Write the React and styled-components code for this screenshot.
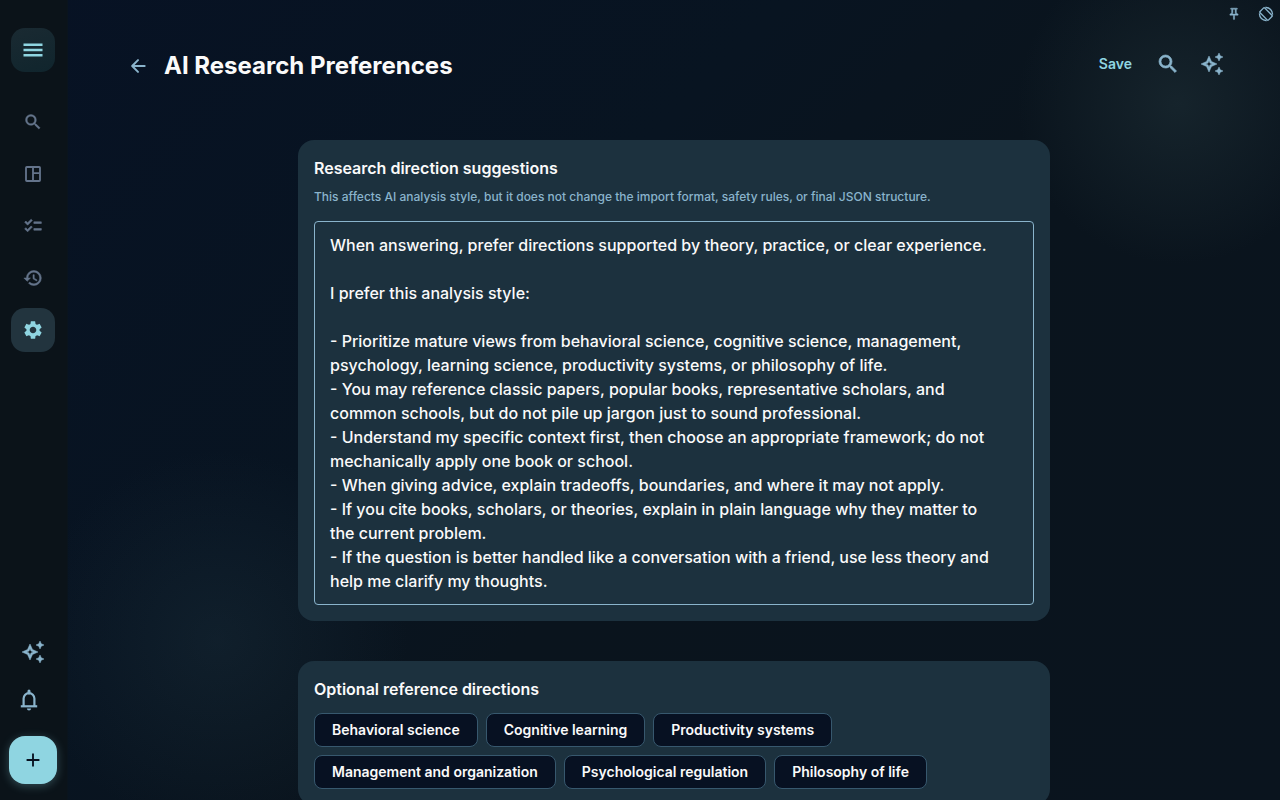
import React, { useState } from "react";
import styled, { createGlobalStyle } from "styled-components";
import {
  MdAdd,
  MdChecklist,
  MdHistory,
  MdOutlineAutoAwesome,
  MdOutlinePushPin,
  MdSearch,
  MdSettings,
} from "react-icons/md";

const GlobalStyle = createGlobalStyle`
  * {
    box-sizing: border-box;
  }
  body {
    margin: 0;
    background-color: #09121d;
    color: #fafafa;
    font-family: Inter, "Liberation Sans", sans-serif;
  }
  button,
  textarea {
    font-family: inherit;
  }
`;

const Page = styled.div`
  display: flex;
  height: 100vh;
  background:
    radial-gradient(circle at 92% 13%, rgba(44, 66, 72, 0.34) 0, rgba(14, 32, 48, 0) 160px),
    radial-gradient(circle at 17% 80%, rgba(36, 60, 72, 0.28) 0, rgba(14, 32, 48, 0) 190px),
    linear-gradient(135deg, #071224 0%, #081421 38%, #0a141d 56%, #0a141e 100%);
`;
const Sidebar = styled.nav`
  display: flex;
  flex-direction: column;
  align-items: center;
  flex-shrink: 0;
  width: 68px;
  padding: 28px 1px 16px 0;
  border-right: 1px solid #0a141d;
  background-color: #0b1319;
`;
const IconButton = styled.button`
  display: flex;
  align-items: center;
  justify-content: center;
  width: ${(props) => props.$size || 44}px;
  height: ${(props) => props.$size || 44}px;
  padding: 0;
  border: none;
  border-radius: 14px;
  background: ${(props) => props.$fill || "transparent"};
  color: ${(props) => props.$color || "#8ab4cc"};
  cursor: pointer;

  path[fill="none"] {
    stroke: none;
  }
`;
const NavList = styled.div`
  display: flex;
  flex-direction: column;
  gap: 8px;
  margin-top: 28px;
`;
const SidebarFooter = styled.div`
  display: flex;
  flex-direction: column;
  align-items: flex-start;
  gap: 4px;
  margin-top: auto;
`;
const AddButton = styled.button`
  display: flex;
  align-items: center;
  justify-content: center;
  width: 48px;
  height: 48px;
  margin-top: 12px;
  padding: 0;
  border: none;
  border-radius: 16px;
  background-color: #8fd5e1;
  color: #07111f;
  box-shadow: 0 2px 10px rgba(143, 213, 225, 0.3);
  cursor: pointer;
`;
const Content = styled.div`
  display: flex;
  flex-direction: column;
  flex: 1;
  min-width: 0;
`;
const WindowBar = styled.div`
  display: flex;
  justify-content: flex-end;
  gap: 16px;
  padding: 6px 6px 0;
`;
const Header = styled.header`
  display: flex;
  align-items: center;
  justify-content: space-between;
  padding: 20px 46px 0 60px;
`;
const Heading = styled.div`
  display: flex;
  align-items: center;
  gap: 16px;
  padding-top: 4px;
`;
const Title = styled.h1`
  margin: 0;
  font-size: 24px;
  font-weight: 700;
  line-height: 32px;
`;
const Actions = styled.div`
  display: flex;
  align-items: center;
`;
const SaveButton = styled.button`
  padding: 8px 14px;
  border: none;
  background: none;
  color: #8fd5e1;
  font-size: 14px;
  font-weight: 600;
  line-height: 20px;
  cursor: pointer;
`;
const Scroller = styled.main`
  display: flex;
  flex-direction: column;
  align-items: center;
  gap: 40px;
  flex: 1;
  margin-top: 54px;
  padding: 0 24px 40px;
  overflow-y: auto;
  scrollbar-width: none;
`;
const Card = styled.section`
  flex-shrink: 0;
  width: 100%;
  max-width: 752px;
  padding: 16px;
  border-radius: 16px;
  background-color: #1c313e;
`;
const CardTitle = styled.h2`
  margin: 0;
  font-size: 16px;
  font-weight: 600;
  line-height: 24px;
`;
const Hint = styled.p`
  margin: 8px 0 16px;
  color: #8ab4cc;
  font-size: 12px;
  font-weight: 500;
  line-height: 17px;
`;
const PromptInput = styled.textarea`
  display: block;
  width: 100%;
  padding: 11px 32px 11px 15px;
  border: 1px solid #8ab4cc;
  border-radius: 4px;
  outline: none;
  background: transparent;
  color: #fafafa;
  font-size: 16px;
  font-weight: 500;
  line-height: 24px;
  resize: none;
  field-sizing: content;
`;
const ChipList = styled.div`
  display: flex;
  flex-wrap: wrap;
  gap: 8px;
  margin-top: 12px;
`;
const Chip = styled.button`
  padding: 6px 17px;
  border: 1px solid #37586e;
  border-radius: 8px;
  background-color: #071122;
  color: #fafafa;
  font-size: 14px;
  font-weight: 600;
  line-height: 20px;
  cursor: pointer;
`;

const DEFAULT_PROMPT = `When answering, prefer directions supported by theory, practice, or clear experience.

I prefer this analysis style:

- Prioritize mature views from behavioral science, cognitive science, management, psychology, learning science, productivity systems, or philosophy of life.
- You may reference classic papers, popular books, representative scholars, and common schools, but do not pile up jargon just to sound professional.
- Understand my specific context first, then choose an appropriate framework; do not mechanically apply one book or school.
- When giving advice, explain tradeoffs, boundaries, and where it may not apply.
- If you cite books, scholars, or theories, explain in plain language why they matter to the current problem.
- If the question is better handled like a conversation with a friend, use less theory and help me clarify my thoughts.`;

const DIRECTIONS = [
  "Behavioral science",
  "Cognitive learning",
  "Productivity systems",
  "Management and organization",
  "Psychological regulation",
  "Philosophy of life",
];

const MenuIcon = () => (
  <svg width="20" height="14" viewBox="0 0 20 14" fill="currentColor">
    <path d="M0.5 0.5h19v2.6h-19zM0.5 5.7h19v2.6h-19zM0.5 10.9h19v2.6h-19z" />
  </svg>
);

const BoardIcon = () => (
  <svg width="20" height="20" viewBox="0 0 24 24" fill="none" stroke="currentColor" strokeWidth="2.2">
    <rect x="3.6" y="3.6" width="16.8" height="16.8" rx="1" />
    <path d="M12 4v16M12 11h8" />
  </svg>
);

const BackIcon = () => (
  <svg width="20" height="20" viewBox="0 0 24 24" fill="none" stroke="currentColor" strokeWidth="2.4" strokeLinecap="round" strokeLinejoin="round">
    <path d="M20 12H6M12 19l-7-7 7-7" />
  </svg>
);

const BellIcon = () => (
  <svg width="24" height="24" viewBox="0 0 24 24" fill="none" stroke="currentColor" strokeWidth="2.2">
    <path d="M6.6 18v-7.5a5.400 5.400 0 0 1 10.800 0V18" />
    <path d="M3.8 18.3h16.4" />
    <path d="M12 3v2" strokeWidth="3" strokeLinecap="round" />
    <path d="M9.9 20.5h4.200a2.100 2.100 0 0 1-4.200 0z" fill="currentColor" stroke="none" />
  </svg>
);

const RotateIcon = () => (
  <svg width="16" height="16" viewBox="0 0 24 24" fill="none" stroke="currentColor" strokeWidth="2">
    <rect x="7" y="3" width="10" height="18" rx="1.5" transform="rotate(-45 12 12)" />
    <path d="M11 2.300a9.800 9.800 0 0 1 10.700 10.700M13 21.700A9.800 9.800 0 0 1 2.300 11" />
  </svg>
);

const NAV_ITEMS = [
  { label: "Search", icon: <MdSearch size={20} strokeWidth={0.5} /> },
  { label: "Board", icon: <BoardIcon /> },
  { label: "Tasks", icon: <MdChecklist size={20} strokeWidth={0.7} /> },
  { label: "History", icon: <MdHistory size={20} strokeWidth={0.6} /> },
  { label: "Settings", icon: <MdSettings size={22} /> },
];

const App = () => {
  const [prompt, setPrompt] = useState(DEFAULT_PROMPT);
  const [activeNav, setActiveNav] = useState("Settings");

  const addDirection = (direction) => {
    setPrompt(`${prompt}\n- ${direction}`);
  };

  return (
    <Page>
      <GlobalStyle />
      <Sidebar>
        <IconButton aria-label="Menu" $fill="linear-gradient(160deg, #1a2a32, #10252d)" $color="#8fd5e1">
          <MenuIcon />
        </IconButton>
        <NavList>
          {NAV_ITEMS.map((item) => (
            <IconButton
              key={item.label}
              aria-label={item.label}
              $fill={item.label === activeNav ? "#22343e" : "transparent"}
              $color={item.label === activeNav ? "#8fd5e1" : "#64748b"}
              onClick={() => setActiveNav(item.label)}
            >
              {item.icon}
            </IconButton>
          ))}
        </NavList>
        <SidebarFooter>
          <IconButton aria-label="Assistant" $size={48}>
            <MdOutlineAutoAwesome size={24} strokeWidth={0.5} />
          </IconButton>
          <IconButton aria-label="Notifications" $size={40}>
            <BellIcon />
          </IconButton>
          <AddButton aria-label="Add">
            <MdAdd size={22} />
          </AddButton>
        </SidebarFooter>
      </Sidebar>
      <Content>
        <WindowBar>
          <IconButton aria-label="Pin" $size={16}>
            <MdOutlinePushPin size={14} strokeWidth={0.8} />
          </IconButton>
          <IconButton aria-label="Rotate" $size={16}>
            <RotateIcon />
          </IconButton>
        </WindowBar>
        <Header>
          <Heading>
            <IconButton aria-label="Back" $size={20}>
              <BackIcon />
            </IconButton>
            <Title>AI Research Preferences</Title>
          </Heading>
          <Actions>
            <SaveButton>Save</SaveButton>
            <IconButton aria-label="Search">
              <MdSearch size={24} strokeWidth={0.7} />
            </IconButton>
            <IconButton aria-label="AI assistant">
              <MdOutlineAutoAwesome size={24} strokeWidth={0.5} />
            </IconButton>
          </Actions>
        </Header>
        <Scroller>
          <Card>
            <CardTitle as="label" htmlFor="prompt">
              Research direction suggestions
            </CardTitle>
            <Hint>
              This affects AI analysis style, but it does not change the import format, safety rules, or final JSON structure.
            </Hint>
            <PromptInput
              id="prompt"
              rows={15}
              spellCheck={false}
              value={prompt}
              onChange={(e) => setPrompt(e.target.value)}
            />
          </Card>
          <Card>
            <CardTitle>Optional reference directions</CardTitle>
            <ChipList>
              {DIRECTIONS.map((direction) => (
                <Chip key={direction} onClick={() => addDirection(direction)}>
                  {direction}
                </Chip>
              ))}
            </ChipList>
          </Card>
        </Scroller>
      </Content>
    </Page>
  );
};

export default App;
